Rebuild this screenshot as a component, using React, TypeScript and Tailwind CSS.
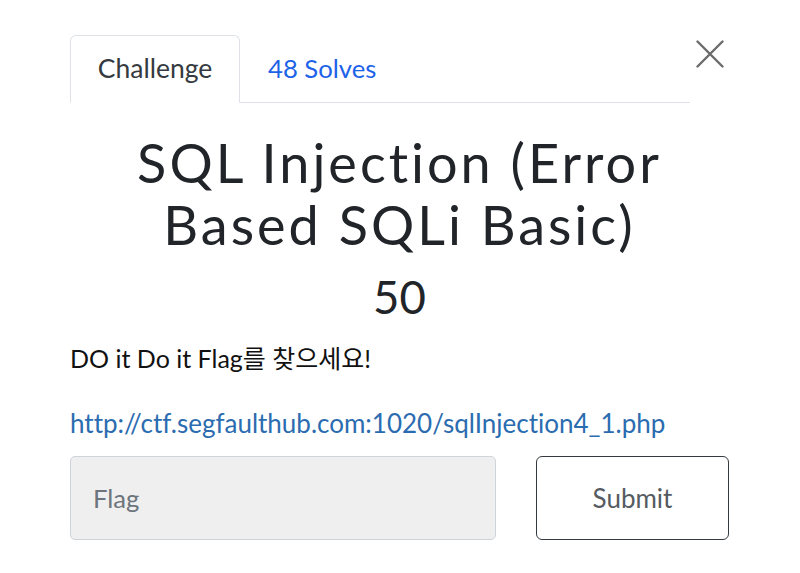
import React from 'react';

export default function App() {
  return (
    <div
      className="w-[800px] h-[573px] bg-white overflow-hidden text-[#212529] [font-variant-ligatures:none]"
      style={{ fontFamily: 'Lato, "Noto Sans CJK KR", sans-serif' }}
    >
      <div className="pl-[70px] pr-[71px] pt-[35px]">
        {/* Tabs header */}
        <div className="flex items-start">
          <ul className="flex flex-1 border-b border-[#dee2e6] h-[68px]">
            <li className="w-[170px] h-[68px] border border-[#dee2e6] border-b-white rounded-t-[6px] bg-white flex items-center justify-center text-[26.5px] text-[#343a40]">
              Challenge
            </li>
            <li className="h-[67px] px-[28px] flex items-center text-[25.7px] text-[#1d63e8]">
              48 Solves
            </li>
          </ul>
          <button className="ml-[6px] mr-[5px] mt-[5px] w-[28px] h-[28px] flex items-center justify-center text-[#6b6b6b]">
            <svg width="28" height="28" viewBox="0 0 28 28" fill="none" stroke="currentColor" strokeWidth="2.4" strokeLinecap="round">
              <path d="M1.5 1.5 L26.5 26.5 M26.5 1.5 L1.5 26.5" />
            </svg>
          </button>
        </div>

        {/* Title */}
        <h3 className="mt-[29px] text-center text-[54px] leading-[62px] tracking-[3px] text-[#212529]">
          SQL Injection (Error
          <br />
          Based SQLi Basic)
        </h3>
        <h4 className="mt-[16px] text-center text-[45.5px] leading-[50px] text-[#212529]">50</h4>

        <p className="mt-[21px] text-[25px] leading-[30px] text-[#111]">DO it Do it Flag를 찾으세요!</p>
        <p className="mt-[35px] text-[26px] leading-[30px]">
          <a className="text-[#2b6cb0]">http://ctf.segfaulthub.com:1020/sqlInjection4_1.php</a>
        </p>

        {/* Submit row */}
        <div className="mt-[18px] flex gap-[40px]">
          <div className="w-[426px] h-[84px] bg-[#efefef] border border-[#cfd4d8] rounded-[5px] flex items-center pl-[22px] text-[25.7px] text-[#6c757d]">
            Flag
          </div>
          <button className="w-[193px] h-[84px] border border-[#343a40] rounded-[6px] bg-white text-[26px] text-[#555b61]">
            Submit
          </button>
        </div>
      </div>
    </div>
  );
}
